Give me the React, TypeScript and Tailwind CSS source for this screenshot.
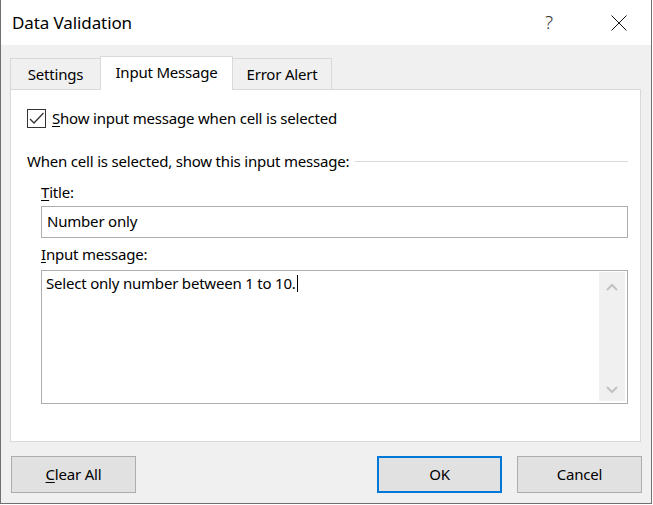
export default function App() {
  return (
    <div
      className="h-[505px] w-[653px] bg-white text-black"
      style={{ fontFamily: '"Noto Sans", "Open Sans", sans-serif' }}
    >
      <div className="flex h-[504px] w-[652px] flex-col border-x border-b border-[#707070]">
        {/* Title bar */}
        <div className="flex h-[45px] shrink-0 items-center bg-white pl-[11px]">
          <span className="text-[17px] leading-none tracking-[-0.1px]">Data Validation</span>
          <div className="ml-auto flex items-center">
            <span className="mr-[58px] text-[19px] font-light leading-none text-[#333]">?</span>
            <svg width="16" height="16" viewBox="0 0 16 16" className="mr-[24px]">
              <path d="M0.5 0.5 L15.5 15.5 M15.5 0.5 L0.5 15.5" stroke="#111" strokeWidth="1" fill="none" />
            </svg>
          </div>
        </div>

        {/* Body */}
        <div className="flex flex-1 flex-col bg-[#f0f0f0] pl-[9px] pr-[10px] pt-[11px]">
          {/* Tabs */}
          <div className="flex h-[34px] items-end text-[15px] tracking-[-0.2px]">
            <div className="flex h-[32px] w-[90px] items-center justify-center border border-r-0 border-[#d9d9d9] bg-[#f0f0f0]">
              Settings
            </div>
            <div className="flex h-[34px] w-[133px] items-center justify-center border border-b-0 border-[#d9d9d9] bg-white pb-[2px]">
              Input Message
            </div>
            <div className="flex h-[32px] w-[99px] items-center justify-center border border-l-0 border-[#d9d9d9] bg-[#f0f0f0]">
              Error Alert
            </div>
            <div className="h-px flex-1 bg-[#d9d9d9]" />
          </div>

          {/* Panel */}
          <div className="flex h-[352px] flex-col border-x border-b border-[#d9d9d9] bg-white pl-4 pr-[12px] text-[15px] tracking-[-0.2px]">
            <div className="mt-[18px] flex items-center gap-[6px]">
              <div className="flex h-[19px] w-[19px] items-center justify-center border border-[#333]">
                <svg width="17" height="17" viewBox="0 0 17 17">
                  <path d="M2 9 L6 13 L15.5 3" stroke="#333" strokeWidth="1.3" fill="none" />
                </svg>
              </div>
              <span className="leading-[20px]">
                <span className="underline underline-offset-2">S</span>how input message when cell is selected
              </span>
            </div>

            <div className="mt-[23px] flex items-center">
              <span className="leading-[20px]">When cell is selected, show this input message:</span>
              <div className="ml-[6px] h-px flex-1 bg-[#dadada]" />
            </div>

            <div className="flex flex-col pl-[14px]">
              <span className="mt-[11px] leading-[20px]">
                <span className="underline underline-offset-2">T</span>itle:
              </span>
              <div className="mt-[4px] flex h-[32px] items-center border border-[#adadad] pb-[2px] pl-[5px]">
                Number only
              </div>
              <span className="mt-[6px] leading-[20px]">
                <span className="underline underline-offset-2">I</span>nput message:
              </span>
              <div className="mt-[6px] flex h-[134px] border border-[#adadad]">
                <div className="flex-1 pl-[4px] pt-[2px] leading-[20px]">
                  Select only number between 1 to 10.
                  <span className="ml-px inline-block h-[17px] w-px bg-black align-[-3px]" />
                </div>
                <div className="mb-[2px] mr-[2px] mt-px flex w-[26px] flex-col items-center justify-between bg-[#f0f0f0] pb-[7px] pt-[11px]">
                  <svg width="12" height="8" viewBox="0 0 12 8">
                    <path d="M1 7 L6 2 L11 7" stroke="#c2c2c2" strokeWidth="2" fill="none" />
                  </svg>
                  <svg width="12" height="8" viewBox="0 0 12 8">
                    <path d="M1 1 L6 6 L11 1" stroke="#c2c2c2" strokeWidth="2" fill="none" />
                  </svg>
                </div>
              </div>
            </div>
          </div>

          {/* Buttons */}
          <div className="mt-[14px] flex pl-px text-[15px] tracking-[-0.2px]">
            <button className="flex h-[37px] w-[125px] items-center justify-center border border-[#adadad] bg-[#e1e1e1]">
              <span className="underline underline-offset-2">C</span>lear All
            </button>
            <button className="ml-auto flex h-[37px] w-[125px] items-center justify-center border-2 border-[#0078d7] bg-[#e1e1e1]">
              OK
            </button>
            <button className="-mr-px ml-[15px] flex h-[37px] w-[125px] items-center justify-center border border-[#adadad] bg-[#e1e1e1]">
              Cancel
            </button>
          </div>
        </div>
      </div>
    </div>
  );
}
